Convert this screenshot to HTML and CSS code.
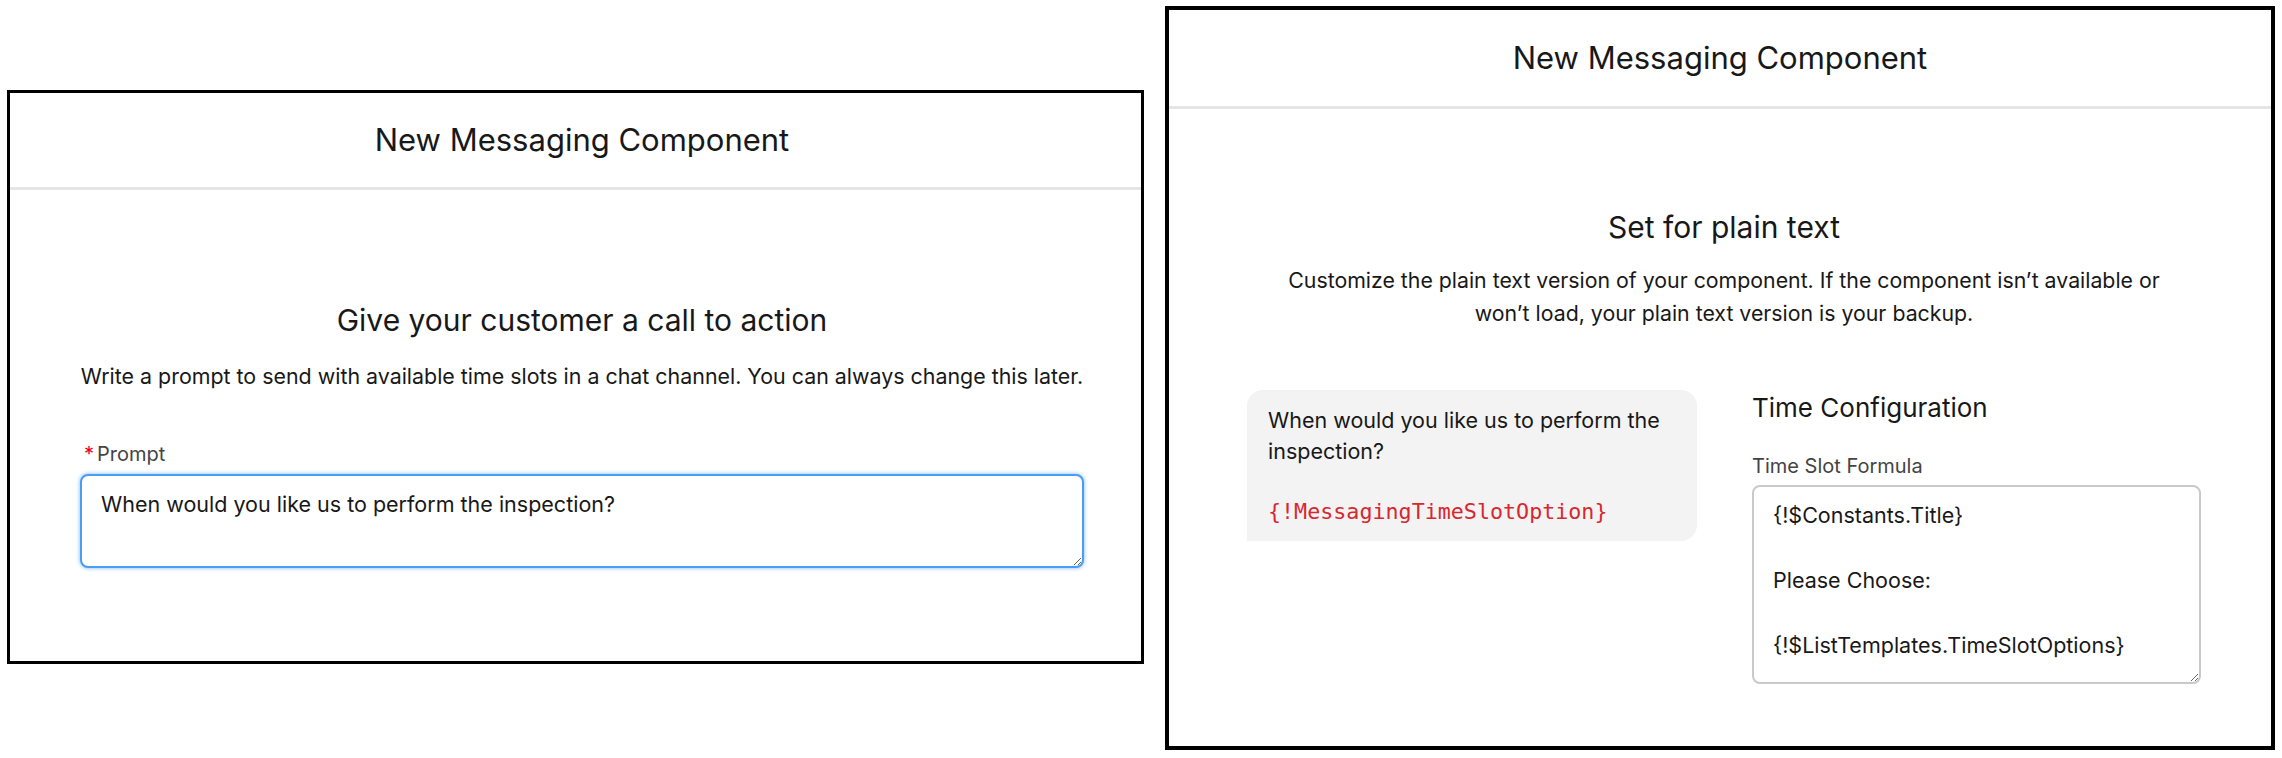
FILE: index.html
```html
<!DOCTYPE html>
<html lang="en">
<head>
<meta charset="utf-8">
<title>New Messaging Component</title>
<link rel="stylesheet" href="styles.css">
</head>
<body>
<div class="stage">
  <section class="panel panel-left">
    <header class="panel-header">New Messaging Component</header>
    <div class="panel-body body-left">
      <h2 class="step-title">Give your customer a call to action</h2>
      <p class="step-desc desc-left">Write a prompt to send with available time slots in a chat channel. You can always change this later.</p>
      <label class="field-label label-prompt"><abbr class="required">*</abbr>Prompt</label>
      <textarea class="field-input input-focus prompt-input" readonly>When would you like us to perform the inspection?</textarea>
    </div>
  </section>

  <section class="panel panel-right">
    <header class="panel-header">New Messaging Component</header>
    <div class="panel-body body-right">
      <h2 class="step-title">Set for plain text</h2>
      <p class="step-desc desc-right">Customize the plain text version of your component. If the component isn’t available or won’t load, your plain text version is your backup.</p>
      <div class="columns">
        <div class="bubble">
          <p class="bubble-text">When would you like us to perform the inspection?</p>
          <code class="merge-field">{!MessagingTimeSlotOption}</code>
        </div>
        <div class="config">
          <h3 class="config-title">Time Configuration</h3>
          <label class="field-label label-formula">Time Slot Formula</label>
          <textarea class="field-input formula-input" readonly>{!$Constants.Title}

Please Choose:

{!$ListTemplates.TimeSlotOptions}</textarea>
        </div>
      </div>
    </div>
  </section>
</div>
</body>
</html>
```

FILE: styles.css
```css
* { box-sizing: border-box; }

html, body {
  margin: 0;
  padding: 0;
  background: #ffffff;
}

body {
  font-family: Inter, "Noto Sans", "Liberation Sans", sans-serif;
  color: #181818;
}

.stage {
  display: flex;
  align-items: flex-start;
  gap: 21px;
  padding-left: 7px;
}

.panel {
  border: 3px solid #000;
  background: #fff;
  display: flex;
  flex-direction: column;
}

.panel-left {
  width: 1137px;
  margin-top: 90px;
}

.panel-right {
  width: 1110px;
  margin-top: 6px;
  border-width: 4px;
}

.panel-header {
  font-size: 31px;
  text-align: center;
  border-bottom: 3px solid #e5e5e5;
  color: #181818;
}

.panel-left .panel-header {
  height: 97px;
  line-height: 94px;
  padding: 0 57px 0 70px;
}

.panel-right .panel-header {
  height: 99px;
  line-height: 96px;
}

.step-title {
  margin: 0;
  font-weight: 400;
  font-size: 30px;
  line-height: 36px;
  text-align: center;
}

.step-desc {
  margin: 0;
  text-align: center;
}

.body-left {
  padding: 112px 57px 93px 70px;
  display: flex;
  flex-direction: column;
}

.desc-left {
  margin: 22px -20px 0;
  font-size: 21.4px;
  line-height: 32px;
}

.field-label {
  display: block;
  font-size: 20px;
  line-height: 24px;
  color: #444444;
}

.label-prompt {
  margin-top: 50px;
  padding-left: 4px;
}

.required {
  color: #ea001e;
  text-decoration: none;
  margin-right: 3px;
}

.field-input {
  display: block;
  width: 100%;
  margin: 8px 0 0;
  font-family: Inter, "Noto Sans", "Liberation Sans", sans-serif;
  font-size: 21.5px;
  color: #181818;
  border: 2px solid #c9c9c9;
  border-radius: 8px;
  padding: 12px 19px;
  background: #fff;
  resize: vertical;
  outline: none;
}

.prompt-input {
  height: 94px;
  line-height: 32px;
}

.input-focus {
  border-color: #4b9cf5;
  box-shadow: 0 0 4px #7ab6f7;
}

.body-right {
  padding: 100px 70px 62px 78px;
}

.desc-right {
  margin: 19px auto 0;
  max-width: 880px;
  font-size: 21.3px;
  line-height: 33px;
}

.columns {
  margin-top: 60px;
  display: flex;
  align-items: flex-start;
  gap: 55px;
}

.bubble {
  width: 450px;
  background: #f3f3f3;
  border-radius: 16px 16px 16px 0;
  padding: 15px 20px 14px 21px;
}

.bubble-text {
  margin: 0;
  font-size: 21.5px;
  line-height: 31px;
}

.merge-field {
  display: block;
  margin-top: 29px;
  font-family: "DejaVu Sans Mono", "Liberation Mono", monospace;
  font-size: 21.7px;
  line-height: 31px;
  color: #d8272f;
}

.config {
  width: 449px;
  padding-top: 1px;
}

.config-title {
  margin: 0;
  font-weight: 400;
  font-size: 26px;
  line-height: 34px;
}

.label-formula {
  margin-top: 29px;
}

.formula-input {
  margin-top: 7px;
  height: 199px;
  line-height: 32.5px;
  padding-top: 12px;
  overflow: hidden;
}
```
